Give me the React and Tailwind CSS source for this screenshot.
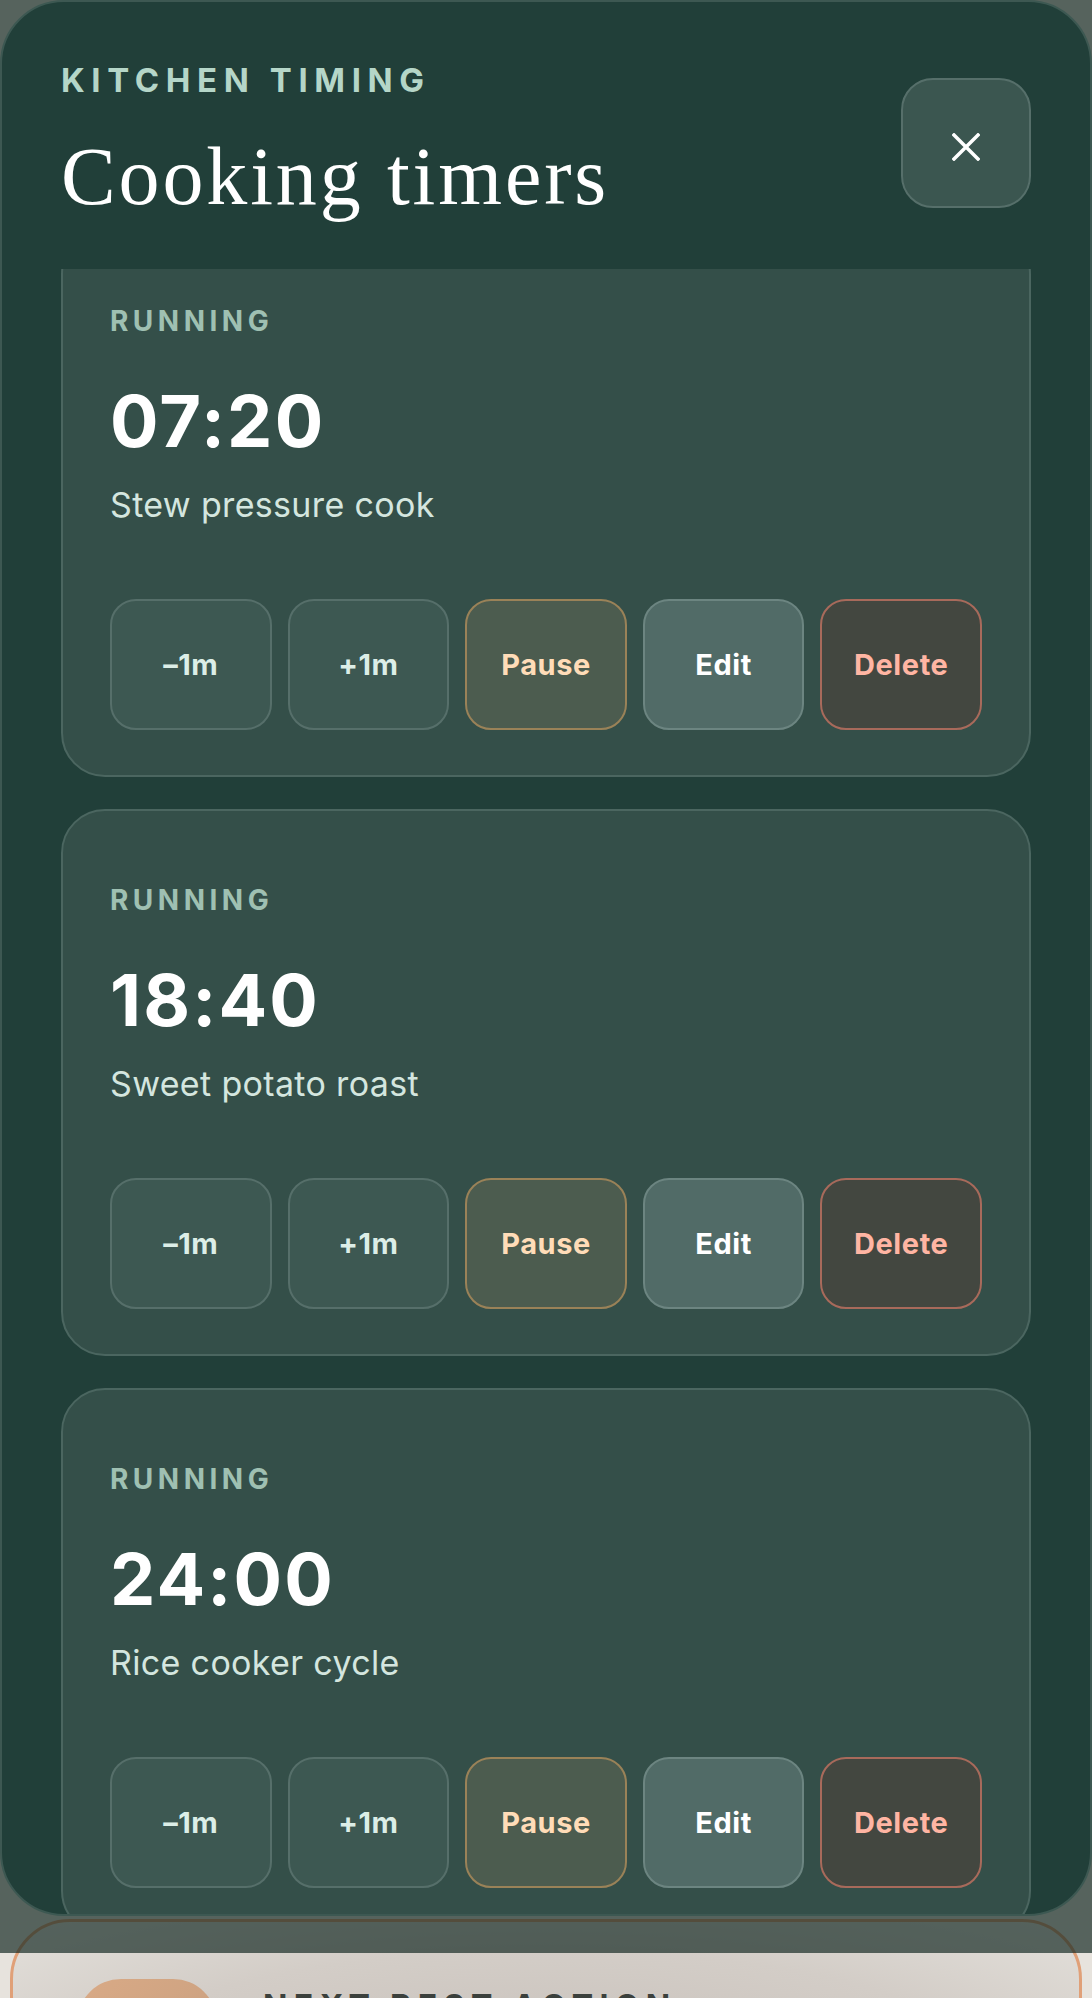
import React from "react";

const timers = [
  { time: "07:20", label: "Stew pressure cook" },
  { time: "18:40", label: "Sweet potato roast" },
  { time: "24:00", label: "Rice cooker cycle" },
];

// button look per action
const actions = [
  { text: "\u20131m", cls: "bg-[#3d5852] border-[#566f6a] text-[#dceee7]" },
  { text: "+1m", cls: "bg-[#3d5852] border-[#566f6a] text-[#dceee7]" },
  { text: "Pause", cls: "bg-[#4c5c4f] border-[#9a8258] text-[#ffdcb8]" },
  { text: "Edit", cls: "bg-[#516b67] border-[#6c8581] text-white" },
  { text: "Delete", cls: "bg-[#434740] border-[#a86a5b] text-[#ffb5a3]" },
];

function TimerCard({ time, label }) {
  return (
    <div className="h-[547px] shrink-0 rounded-[44px] border-2 border-[#4b6660] bg-[#344f49] px-[47px] pt-[72px]">
      <div className="text-[28px] font-bold leading-[35px] tracking-[0.16em] text-[#9fc0b2]">
        RUNNING
      </div>
      <div className="mt-[46px] text-[72px] font-bold leading-none tracking-[0.03em] text-white">
        {time}
      </div>
      <div className="mt-[28px] text-[34px] leading-[40px] tracking-[0.01em] text-[#d4e6df]">{label}</div>
      <div className="mt-[74px] grid grid-cols-5 gap-[16px]">
        {actions.map((a) => (
          <button
            key={a.text}
            className={`flex h-[131px] items-center justify-center rounded-[26px] border-2 text-[29px] font-bold tracking-[0.02em] ${a.cls}`}
          >
            {a.text}
          </button>
        ))}
      </div>
    </div>
  );
}

export default function App() {
  return (
    <div
      className="relative h-[1998px] w-[1092px] overflow-hidden bg-[#e7e3dd]"
      style={{ fontFamily: "Inter, 'Noto Sans', sans-serif" }}
    >
      {/* page underneath the sheet */}
      <div className="px-[10px] pt-[1919px]">
        <div className="flex gap-[46px] rounded-[60px] border-[3px] border-[#e0a078] bg-[radial-gradient(ellipse_at_center,#c9c2bc_0%,#d3cdc7_55%,#e4e1dc_100%)] px-[64px] pt-[57px] pb-[60px]">
          <div className="h-[140px] w-[140px] shrink-0 rounded-[44px] bg-[linear-gradient(135deg,#d9aa86,#c59d7e)]" />
          <div className="pt-[12px] text-[32px] font-bold leading-none tracking-[0.2em] text-[#3b403c]">
            NEXT BEST ACTION
          </div>
        </div>
      </div>

      {/* backdrop */}
      <div className="absolute inset-x-0 top-0 h-[1953px] bg-[rgba(18,38,32,0.68)]" />

      {/* sheet */}
      <div className="absolute left-0 top-0 flex h-[1916px] w-[1092px] flex-col overflow-hidden rounded-[64px] border-2 border-[#3d5852] bg-[#213f39]">
        <div className="flex h-[267px] shrink-0 items-start justify-between pl-[59px] pr-[59px] pt-[62px]">
          <div>
            <div className="text-[33px] font-bold leading-none tracking-[0.2em] text-[#b5d6c8]">
              KITCHEN TIMING
            </div>
            <h1
              className="mt-[39px] text-[82px] leading-none tracking-[0.035em] text-white"
              style={{ fontFamily: "'Liberation Serif', 'DejaVu Serif', serif" }}
            >
              Cooking timers
            </h1>
          </div>
          <button className="mt-[14px] flex h-[130px] w-[130px] items-center justify-center rounded-[32px] border-2 border-[#566f6a] bg-[#3b5650]">
            <svg width="28" height="28" viewBox="0 0 28 28" className="mt-[8px]">
              <path d="M2 2 L26 26 M26 2 L2 26" stroke="white" strokeWidth="3.5" strokeLinecap="square" />
            </svg>
          </button>
        </div>

        <div className="min-h-0 flex-1 overflow-hidden px-[59px]">
          <div className="-mt-[39px] flex flex-col gap-[32px]">
            {timers.map((t) => (
              <TimerCard key={t.time} {...t} />
            ))}
          </div>
        </div>
      </div>
    </div>
  );
}
